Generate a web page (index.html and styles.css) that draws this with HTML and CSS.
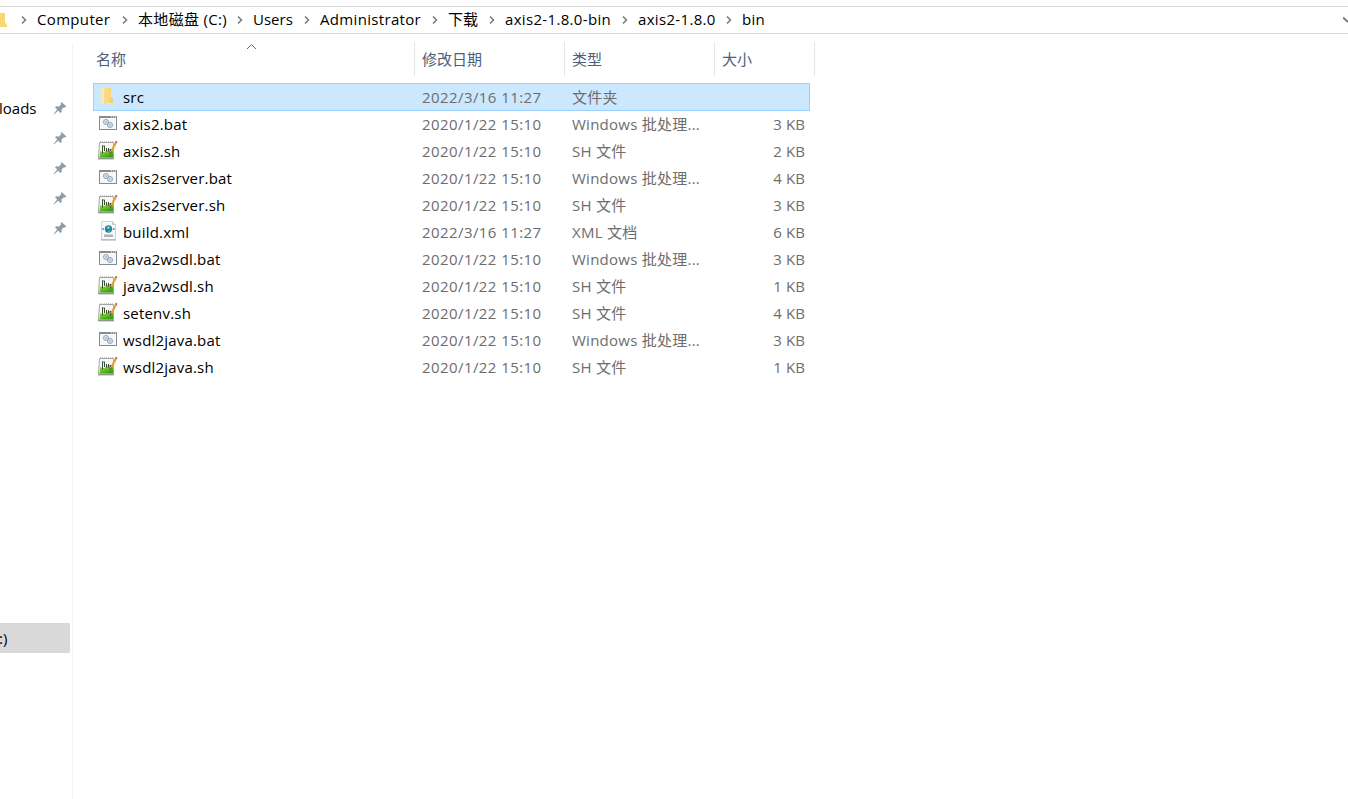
FILE: index.html
```
<!DOCTYPE html>
<html lang="zh-CN">

<head>
    <meta charset="UTF-8">
    <title>bin</title>
    <link rel="stylesheet" href="styles.css">
</head>

<body>

    <!-- shared icons -->
    <svg class="icon-defs">
        <linearGradient id="folderFill" x1="0" x2="1">
            <stop offset="0" stop-color="#ffe89f" />
            <stop offset="1" stop-color="#f4cf6c" />
        </linearGradient>
        <linearGradient id="greenFill" x1="0" y1="0" x2="0.6" y2="1">
            <stop offset="0" stop-color="#b6f23c" />
            <stop offset="1" stop-color="#2f9f16" />
        </linearGradient>
        <symbol id="folder" viewBox="0 0 20 20">
            <path d="M3 2h10v10l2 1v4H6L3 16z" fill="url(#folderFill)" />
            <path d="M3 2l4 2v14l-4-2z" fill="#ffe9a6" />
            <path d="M7 4v14M13 11v6" stroke="#edc666" stroke-width="0.7" />
        </symbol>
        <symbol id="bat" viewBox="0 0 20 20">
            <rect x="1.5" y="3.5" width="17" height="13" fill="#f5f7f8" stroke="#858c91" />
            <path d="M1 4h18" stroke="#858c91" stroke-width="2" />
            <path d="M13 4h1M15 4h1M17 4h1" stroke="#fff" />
            <circle cx="8" cy="9" r="2.5" fill="#eceef0" stroke="#92969b" stroke-width="0.9" />
            <circle cx="8" cy="9" r="0.8" fill="#fff" stroke="#92979c" stroke-width="0.6" />
            <circle cx="12" cy="12" r="2.5" fill="#e4edf5" stroke="#7c98b1" stroke-width="0.9" />
            <circle cx="12" cy="12" r="0.8" fill="#fff" stroke="#829bb2" stroke-width="0.6" />
        </symbol>
        <symbol id="sh" viewBox="0 0 20 20">
            <path d="M1.500 2.500h14v15.500h-15z" fill="#f6f8f3" stroke="#a3a8a1" />
            <path d="M2 11q4 2 7-.5t6-.5v7.500H1.500z" fill="url(#greenFill)" />
            <path d="M0 18.800h16" stroke="#6f806b" />
            <path d="M2 2h13" stroke="#999" stroke-dasharray="1 1" />
            <path d="M4.500 5.500v8M6.500 6v5M8.500 8v3.500M10.500 8v3.500M12.500 9v2" stroke="#3d4f38" />
            <path d="M4 6h3" stroke="#3d4f38" stroke-width="0.8" />
            <path d="M18 2.500l-5 9.500" stroke="#e2a43a" stroke-width="2.200" />
            <path d="M18.600 1.200l-.8 1.600" stroke="#c46557" stroke-width="2.200" />
            <path d="M13.200 11.500l-1 2" stroke="#654b29" stroke-width="1.200" />
        </symbol>
        <symbol id="xml" viewBox="0 0 20 20">
            <path d="M3.500 .500h11l3 3v15h-14z" fill="#f8f9fa" stroke="#cfd2d4" />
            <path d="M14.500 .500v3h3" fill="#e5e7e9" stroke="#bfc2c4" />
            <path d="M3 19h15" stroke="#a6a9ab" />
            <circle cx="10.500" cy="8" r="3.700" fill="#287cc0" />
            <path d="M8.500 5.500l3-.5 1.500 2-2 1-2-.5zM10 9.500l3-1-1 2.500-2 .5z" fill="#3eb25b" />
            <path d="M9.500 6h1.500v1.500H9.500z" fill="#c5efff" />
            <path d="M4.500 8h1.500M15 8h1.500" stroke="#3d729b" stroke-width="1.500" />
            <path d="M6 13.500h9v2.500H6z" fill="#b1b5b8" />
        </symbol>
        <symbol id="pin" viewBox="0 0 14 14">
            <path d="M8.500 1l5 4.500-1.500 1-1-.3-2.500 2.300.3 2.500-1.300 1-2.300-2.300L.8 13.500l-.3-.4 3.700-4.600L2 6.300l1.200-1.100 2.800.2 2.300-2.500-.5-1z" fill="#929ca5" />
        </symbol>
        <symbol id="arrow" viewBox="0 0 8 10">
            <path d="M2 1.500L5.500 5 2 8.500" fill="none" stroke="#777" stroke-width="1.5" />
        </symbol>
    </svg>

    <div class="address-bar">
        <svg class="address-folder" viewBox="0 0 7 16"><path d="M0 1h5v10l2 1v3H0z" fill="#f8d775" /></svg>
        <svg class="arrow"><use href="#arrow" /></svg>
        <div class="crumbs">
            <div class="crumb"><span class="latin">Computer</span><svg class="arrow"><use href="#arrow" /></svg></div>
            <div class="crumb"><span class="latin">本地磁盘 (C:)</span><svg class="arrow"><use href="#arrow" /></svg></div>
            <div class="crumb"><span>Users</span><svg class="arrow"><use href="#arrow" /></svg></div>
            <div class="crumb"><span class="latin">Administrator</span><svg class="arrow"><use href="#arrow" /></svg></div>
            <div class="crumb"><span>下载</span><svg class="arrow"><use href="#arrow" /></svg></div>
            <div class="crumb"><span class="latin">axis2-1.8.0-bin</span><svg class="arrow"><use href="#arrow" /></svg></div>
            <div class="crumb"><span class="latin">axis2-1.8.0</span><svg class="arrow"><use href="#arrow" /></svg></div>
            <div class="crumb"><span class="latin">bin</span></div>
        </div>
        <svg class="history" viewBox="0 0 5 8"><path d="M0 1.500l5 4.500" fill="none" stroke="#777" stroke-width="2" /></svg>
    </div>

    <div class="explorer">
        <div class="sidebar">
            <div class="quick-item"><span class="label">loads</span><svg class="pin"><use href="#pin" /></svg></div>
            <div class="quick-item"><svg class="pin"><use href="#pin" /></svg></div>
            <div class="quick-item"><svg class="pin"><use href="#pin" /></svg></div>
            <div class="quick-item"><svg class="pin"><use href="#pin" /></svg></div>
            <div class="quick-item"><svg class="pin"><use href="#pin" /></svg></div>
            <div class="drive"><span class="label">:)</span></div>
        </div>

        <div class="files">
            <div class="header">
                <div class="col">名称<svg class="sort" viewBox="0 0 11 7"><path d="M1 6l4.500-4.500L10 6" fill="none" stroke="#666" /></svg></div>
                <div class="col">修改日期</div>
                <div class="col">类型</div>
                <div class="col">大小</div>
            </div>

            <div class="row selected"><svg class="icon"><use href="#folder" /></svg><span class="name">src</span><span class="date">2022/3/16 11:27</span><span class="type">文件夹</span><span class="size"></span></div>
            <div class="row"><svg class="icon"><use href="#bat" /></svg><span class="name">axis2.bat</span><span class="date">2020/1/22 15:10</span><span class="type">Windows 批处理...</span><span class="size">3 KB</span></div>
            <div class="row"><svg class="icon"><use href="#sh" /></svg><span class="name">axis2.sh</span><span class="date">2020/1/22 15:10</span><span class="type">SH 文件</span><span class="size">2 KB</span></div>
            <div class="row"><svg class="icon"><use href="#bat" /></svg><span class="name">axis2server.bat</span><span class="date">2020/1/22 15:10</span><span class="type">Windows 批处理...</span><span class="size">4 KB</span></div>
            <div class="row"><svg class="icon"><use href="#sh" /></svg><span class="name">axis2server.sh</span><span class="date">2020/1/22 15:10</span><span class="type">SH 文件</span><span class="size">3 KB</span></div>
            <div class="row"><svg class="icon"><use href="#xml" /></svg><span class="name">build.xml</span><span class="date">2022/3/16 11:27</span><span class="type">XML 文档</span><span class="size">6 KB</span></div>
            <div class="row"><svg class="icon"><use href="#bat" /></svg><span class="name">java2wsdl.bat</span><span class="date">2020/1/22 15:10</span><span class="type">Windows 批处理...</span><span class="size">3 KB</span></div>
            <div class="row"><svg class="icon"><use href="#sh" /></svg><span class="name">java2wsdl.sh</span><span class="date">2020/1/22 15:10</span><span class="type">SH 文件</span><span class="size">1 KB</span></div>
            <div class="row"><svg class="icon"><use href="#sh" /></svg><span class="name">setenv.sh</span><span class="date">2020/1/22 15:10</span><span class="type">SH 文件</span><span class="size">4 KB</span></div>
            <div class="row"><svg class="icon"><use href="#bat" /></svg><span class="name">wsdl2java.bat</span><span class="date">2020/1/22 15:10</span><span class="type">Windows 批处理...</span><span class="size">3 KB</span></div>
            <div class="row"><svg class="icon"><use href="#sh" /></svg><span class="name">wsdl2java.sh</span><span class="date">2020/1/22 15:10</span><span class="type">SH 文件</span><span class="size">1 KB</span></div>
        </div>
    </div>

</body>

</html>
```
FILE: styles.css
```
* {
    box-sizing: border-box;
}

body {
    margin: 0;
    height: 799px;
    padding-top: 6px;
    overflow: hidden;
    background: #fff;
    color: #000;
    font-family: "Open Sans", "Noto Sans CJK SC", sans-serif;
    font-size: 15px;
    white-space: nowrap;
}

svg {
    display: block;
    flex: none;
}

.icon-defs {
    position: absolute;
    width: 0;
    height: 0;
}

.address-bar {
    display: flex;
    align-items: center;
    height: 28px;
    padding-bottom: 1px;
    border-top: 1px solid #d9d9d9;
    border-bottom: 1px solid #d9d9d9;
}

.address-folder {
    width: 7px;
    height: 16px;
    margin-right: 13px;
}

.arrow {
    width: 8px;
    height: 10px;
}

.crumbs {
    display: grid;
    grid-template-columns: 101px 115px 67px 128px 57px 133px 104px auto;
    margin-left: 9px;
    line-height: 23px;
}

.crumb {
    display: flex;
    align-items: center;
    justify-content: space-between;
    padding-right: 9px;
}

.latin {
    letter-spacing: 0.33px;
}

.history {
    width: 5px;
    height: 8px;
    margin-left: auto;
}

.explorer {
    display: flex;
    height: 765px;
}

.sidebar {
    width: 73px;
    margin-top: 9px;
    padding-top: 50px;
    border-right: 1px solid #f3f3f3;
}

.quick-item {
    display: flex;
    align-items: center;
    width: 67px;
    height: 30px;
}

/* labels run off the left edge */
.label {
    margin-left: -1px;
}

.pin {
    width: 14px;
    height: 14px;
    margin-left: auto;
}

.drive {
    width: 70px;
    height: 30px;
    margin-top: 380px;
    line-height: 30px;
    background: #d9d9d9;
}

.files {
    width: 722px;
    margin-left: 20px;
    padding-top: 8px;
}

.header {
    display: grid;
    grid-template-columns: 322px 150px 150px 100px;
    height: 33px;
    margin-bottom: 8px;
    line-height: 34px;
    color: #4c607a;
}

.col {
    position: relative;
    padding-left: 7px;
    border-right: 1px solid #e5e5e5;
}

.col:first-child {
    padding-left: 3px;
}

.sort {
    position: absolute;
    left: 153px;
    top: 1px;
    width: 11px;
    height: 7px;
}

.row {
    display: grid;
    grid-template-columns: 25px 299px 150px 150px 83px;
    align-items: center;
    width: 717px;
    height: 27px;
    padding-left: 5px;
    line-height: 25px;
    color: #6d6d6d;
}

.selected {
    height: 28px;
    padding-left: 4px;
    background: #cce8ff;
    border: 1px solid #99d1ff;
}

.icon {
    width: 20px;
    height: 20px;
    margin-top: -3px;
}

.name {
    color: #000;
    letter-spacing: 0.19px;
}

.date {
    letter-spacing: 0.42px;
}

.type {
    letter-spacing: 0.25px;
}

.size {
    text-align: right;
    letter-spacing: 0.1px;
}
```
